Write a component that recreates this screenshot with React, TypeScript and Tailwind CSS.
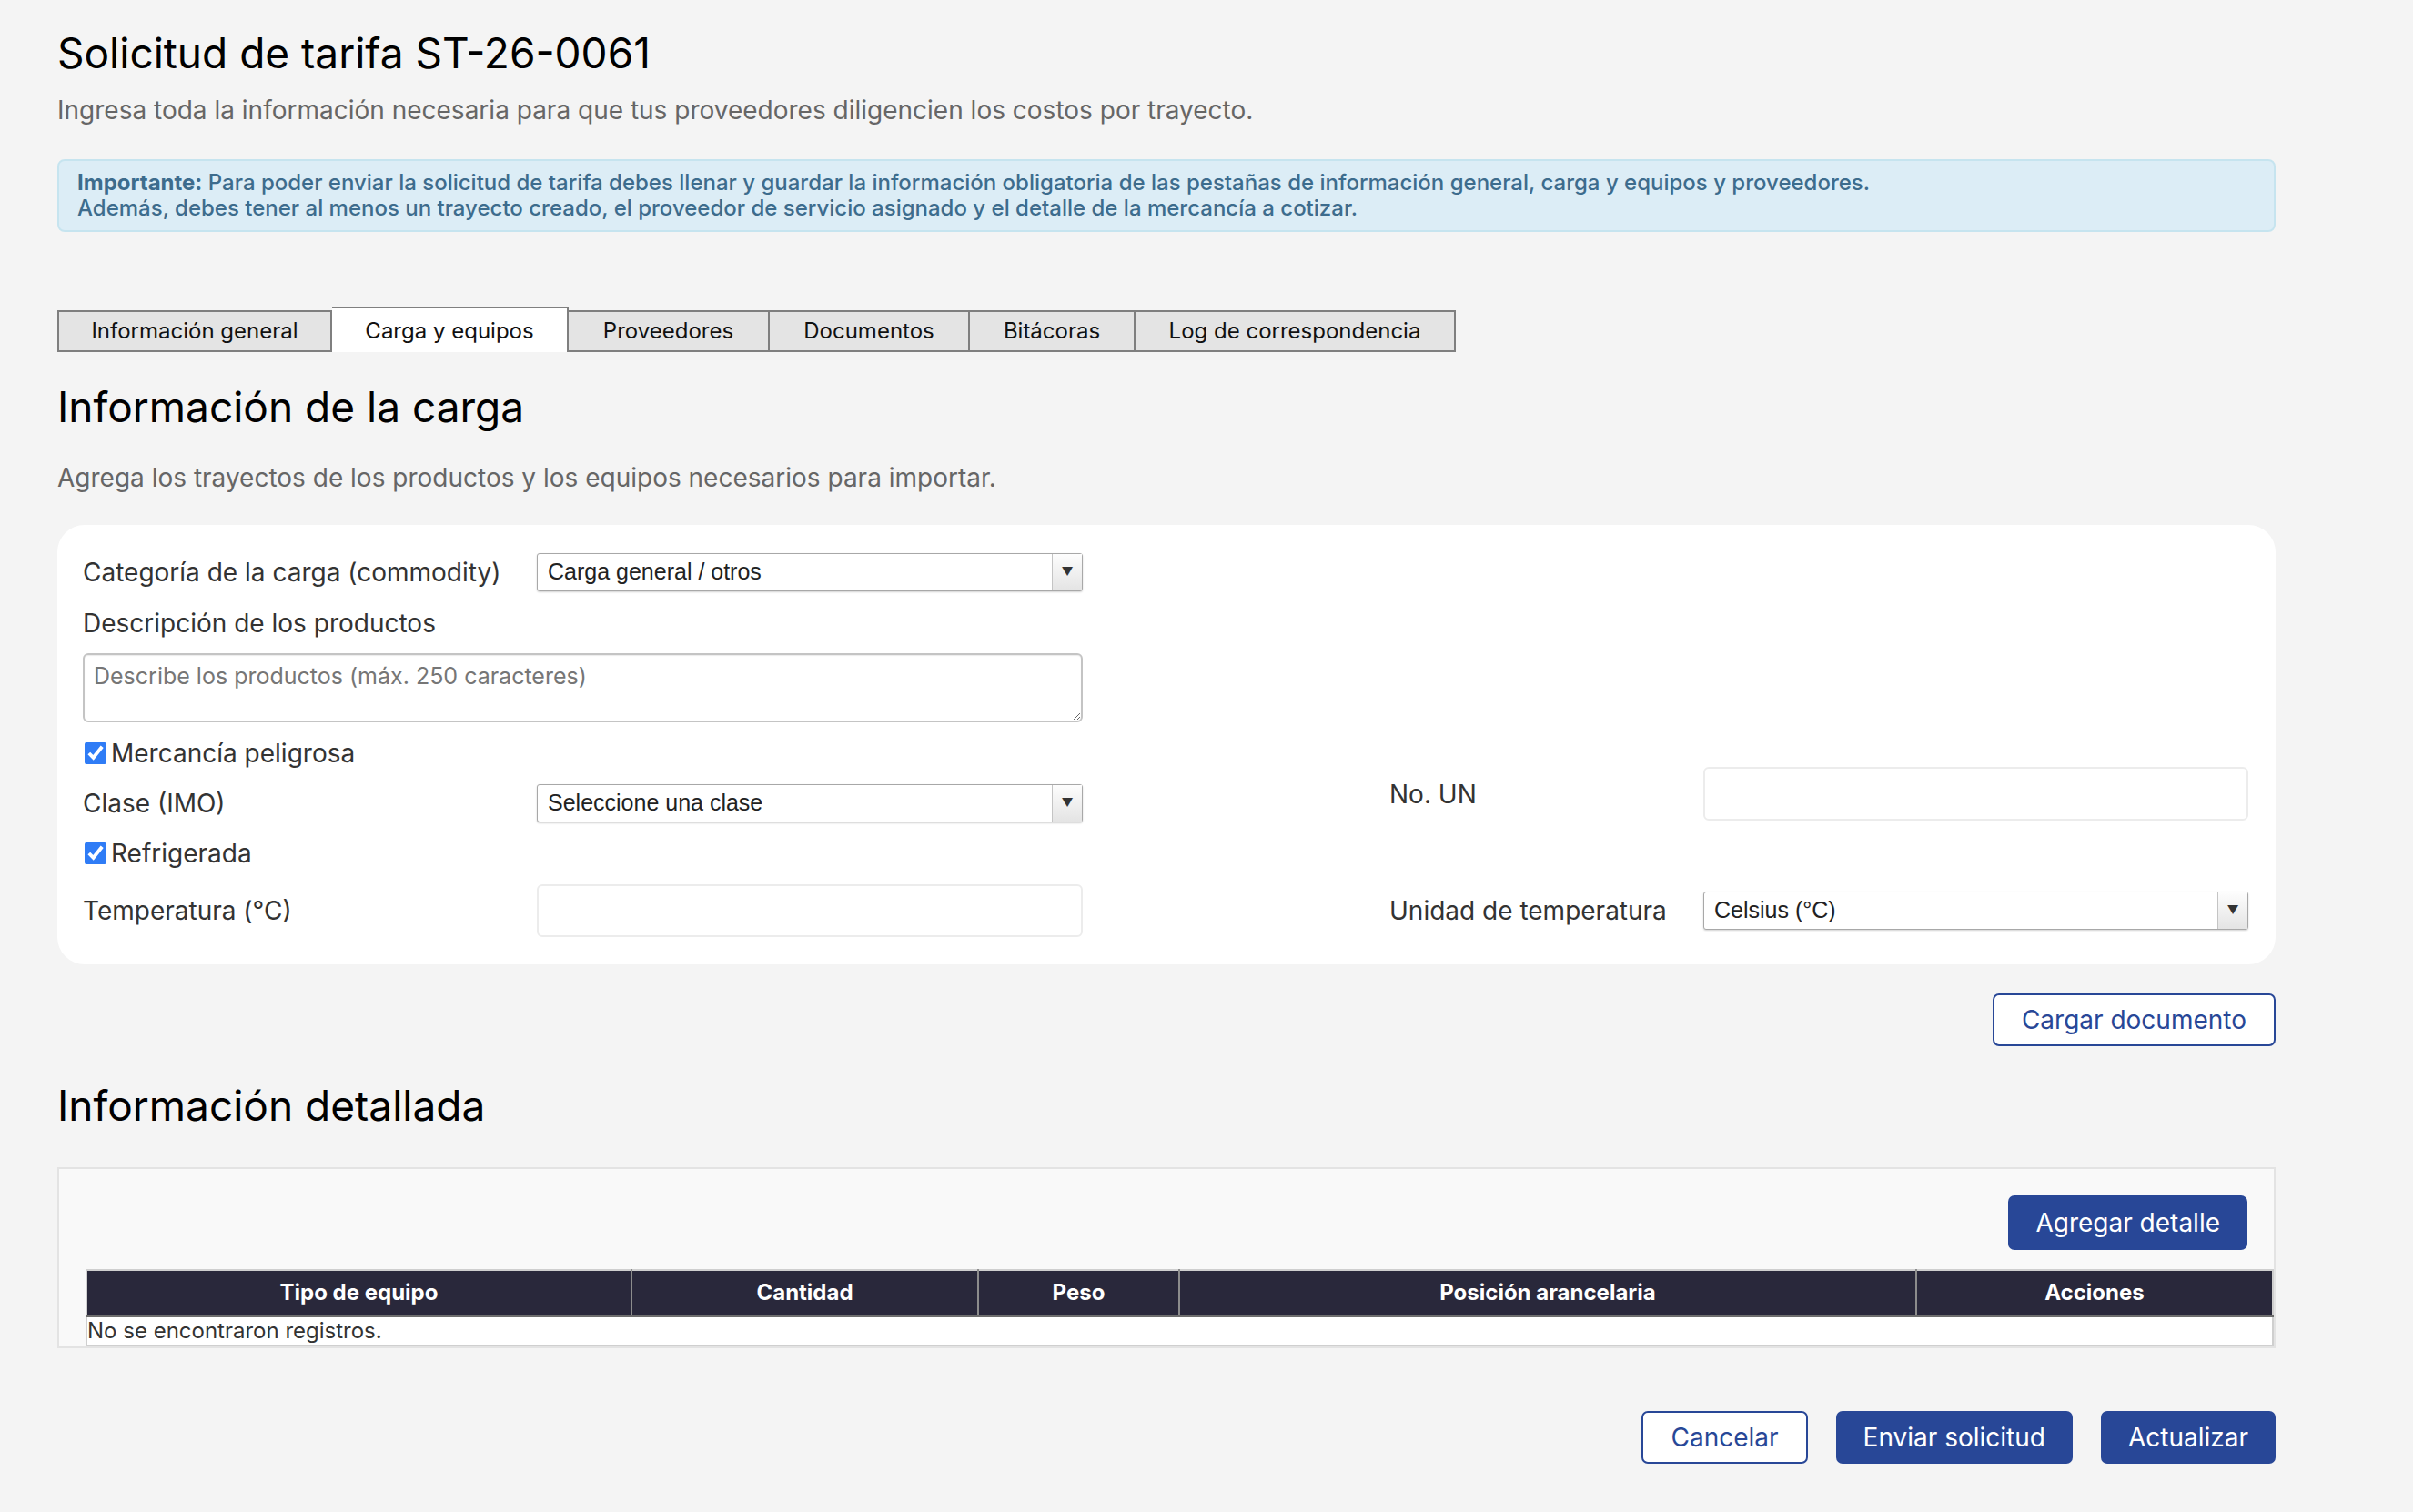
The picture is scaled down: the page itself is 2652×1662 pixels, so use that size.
import React from 'react'

const tabs = [
  { label: 'Información general', w: 'w-[302px]' },
  { label: 'Carga y equipos', w: 'w-[260px]', active: true },
  { label: 'Proveedores', w: 'w-[221px]' },
  { label: 'Documentos', w: 'w-[220px]' },
  { label: 'Bitácoras', w: 'w-[182px]' },
  { label: 'Log de correspondencia', w: 'w-[352px]' },
]

const columns = [
  { label: 'Tipo de equipo', w: 'w-[599px]' },
  { label: 'Cantidad', w: 'w-[381px]' },
  { label: 'Peso', w: 'w-[221px]' },
  { label: 'Posición arancelaria', w: 'w-[810px]' },
  { label: 'Acciones', w: '' },
]

function SelectBox({ value, className = '' }: { value: string; className?: string }) {
  return (
    <div
      className={`flex h-[42px] items-stretch rounded-[3px] border border-[#a8a8a8] bg-white shadow-[0_1px_2px_rgba(0,0,0,0.18)] ${className}`}
    >
      <div className="flex flex-1 items-center pl-[11px] font-['Liberation_Sans',Arial,sans-serif] text-[25px] text-[#222]">
        {value}
      </div>
      <div className="flex w-[33px] items-center justify-center border-l border-[#c4c4c4] bg-gradient-to-b from-[#fdfdfd] to-[#e4e4e4] text-[13px] text-[#333]">
        ▼
      </div>
    </div>
  )
}

function Check({ label }: { label: string }) {
  return (
    <label className="flex h-[34px] items-center text-[28px] text-[#333]">
      <input type="checkbox" defaultChecked className="ml-[2px] mr-[5px] h-[24px] w-[24px] accent-[#2f7cf6]" />
      {label}
    </label>
  )
}

export default function App() {
  return (
    <div className="min-h-screen bg-[#f4f4f4] font-['Inter',sans-serif] text-[#111]">
      <div className="ml-[63px] w-[2438px] pt-[29px] pb-[54px]">
        <h1 className="text-[46px] leading-[58px] font-normal text-black">Solicitud de tarifa ST-26-0061</h1>
        <p className="mt-[17px] text-[28px] leading-[34px] text-[#666]">
          Ingresa toda la información necesaria para que tus proveedores diligencien los costos por trayecto.
        </p>

        <div className="mt-[37px] rounded-[8px] border-2 border-[#c6e4ef] bg-[#dcedf6] px-[20px] py-[10px] text-[24px] leading-[28px] font-medium text-[#3d6c8d]">
          <strong className="font-bold">Importante:</strong> Para poder enviar la solicitud de tarifa debes llenar y guardar la información obligatoria de las pestañas de información general, carga y equipos y proveedores.
          <br />
          Además, debes tener al menos un trayecto creado, el proveedor de servicio asignado y el detalle de la mercancía a cotizar.
        </div>

        {/* pestañas */}
        <div className="mt-[82px] flex items-end">
          {tabs.map((t, i) =>
            t.active ? (
              <div
                key={t.label}
                className={`${t.w} flex h-[50px] items-center justify-center border-t-2 border-r-2 border-[#7f7f7f] bg-white pt-[2px] text-[24px] text-[#111]`}
              >
                {t.label}
              </div>
            ) : (
              <div
                key={t.label}
                className={`${t.w} flex h-[46px] items-center justify-center border-y-2 border-r-2 border-[#7f7f7f] bg-[#e4e4e4] text-[24px] text-[#111] ${i === 0 ? 'border-l-2' : ''}`}
              >
                {t.label}
              </div>
            )
          )}
        </div>

        <h2 className="mt-[31px] text-[46px] leading-[58px] font-normal text-black">Información de la carga</h2>
        <p className="mt-[32px] text-[28px] leading-[34px] text-[#666]">
          Agrega los trayectos de los productos y los equipos necesarios para importar.
        </p>

        {/* formulario de carga */}
        <div className="mt-[35px] flex rounded-[30px] bg-white pt-[31px] pr-[30px] pb-[30px] pl-[28px]">
          <div className="flex w-[1099px] flex-col">
            <div className="flex h-[42px] items-center">
              <span className="w-[499px] text-[28px] text-[#333]">Categoría de la carga (commodity)</span>
              <SelectBox value="Carga general / otros" className="w-[600px]" />
            </div>
            <div className="mt-[18px] text-[28px] leading-[34px] text-[#333]">Descripción de los productos</div>
            <textarea
              placeholder="Describe los productos (máx. 250 caracteres)"
              className="mt-[16px] h-[76px] w-[1099px] rounded-[6px] border-2 border-[#c4c4c4] bg-white px-[10px] py-[8px] text-[25px] leading-[30px] text-[#333] placeholder:text-[#767676] shadow-[inset_0_1px_1px_rgba(0,0,0,0.08)]"
            />
            <div className="mt-[17px]">
              <Check label="Mercancía peligrosa" />
            </div>
            <div className="mt-[17px] flex h-[42px] items-center">
              <span className="w-[499px] text-[28px] text-[#333]">Clase (IMO)</span>
              <SelectBox value="Seleccione una clase" className="w-[600px]" />
            </div>
            <div className="mt-[17px]">
              <Check label="Refrigerada" />
            </div>
            <div className="mt-[17px] flex h-[58px] items-center">
              <span className="w-[499px] text-[28px] text-[#333]">Temperatura (°C)</span>
              <input className="h-[58px] w-[600px] rounded-[6px] border-2 border-[#ececec] bg-white" />
            </div>
          </div>

          <div className="ml-[337px] flex w-[944px] flex-col pt-[235px]">
            <div className="flex h-[59px] items-center">
              <span className="w-[345px] text-[28px] text-[#333]">No. UN</span>
              <input className="h-[59px] w-[599px] rounded-[6px] border-2 border-[#ececec] bg-white" />
            </div>
            <div className="mt-[70px] flex h-[58px] items-center">
              <span className="w-[345px] text-[28px] text-[#333]">Unidad de temperatura</span>
              <SelectBox value="Celsius (°C)" className="w-[599px]" />
            </div>
          </div>
        </div>

        <div className="mt-[32px] flex justify-end">
          <button className="h-[58px] rounded-[7px] border-2 border-[#284797] bg-white px-[30px] text-[28px] text-[#284797]">
            Cargar documento
          </button>
        </div>

        <h2 className="mt-[36px] text-[46px] leading-[58px] font-normal text-black">Información detallada</h2>

        {/* detalle de mercancía */}
        <div className="mt-[39px] border-2 border-[#e3e3e3] bg-[#f9f9f9] pt-[29px] pl-[29px]">
          <div className="flex justify-end pr-[29px]">
            <button className="h-[60px] rounded-[7px] bg-[#284797] px-[30px] text-[28px] text-white">Agregar detalle</button>
          </div>
          <table className="mt-[21px] w-full border-collapse border-2 border-[#cfcfcf] bg-white">
            <thead>
              <tr className="h-[50px] bg-[#29283b]">
                {columns.map((c, i) => (
                  <th
                    key={c.label}
                    className={`${c.w} border-b-[3px] border-b-[#6d6d6d] text-center text-[24px] font-bold text-white ${i < columns.length - 1 ? 'border-r-2 border-r-[#8c8c8c]' : ''}`}
                  >
                    {c.label}
                  </th>
                ))}
              </tr>
            </thead>
            <tbody>
              <tr className="h-[31px]">
                <td colSpan={5} className="p-0 text-left text-[24px] leading-[30px] text-[#333]">
                  No se encontraron registros.
                </td>
              </tr>
            </tbody>
          </table>
        </div>

        <div className="mt-[69px] flex justify-end gap-[31px]">
          <button className="h-[58px] rounded-[7px] border-2 border-[#284797] bg-white px-[30px] text-[28px] text-[#284797]">
            Cancelar
          </button>
          <button className="h-[58px] rounded-[7px] bg-[#284797] px-[30px] text-[28px] text-white">Enviar solicitud</button>
          <button className="h-[58px] rounded-[7px] bg-[#284797] px-[30px] text-[28px] text-white">Actualizar</button>
        </div>
      </div>
    </div>
  )
}
